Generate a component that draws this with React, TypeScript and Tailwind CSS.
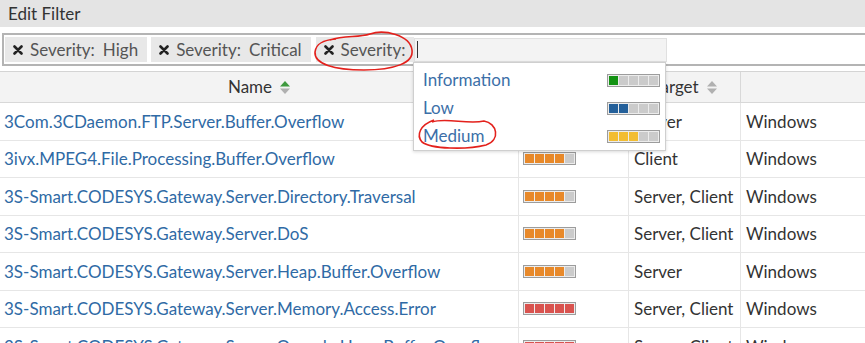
import React from 'react'

type Row = {
  name: string
  level: number
  color: string
  target: string
  os: string
}

const rows: Row[] = [
  { name: '3Com.3CDaemon.FTP.Server.Buffer.Overflow', level: 4, color: 'bg-[#e8892a]', target: 'Server', os: 'Windows' },
  { name: '3ivx.MPEG4.File.Processing.Buffer.Overflow', level: 4, color: 'bg-[#e8892a]', target: 'Client', os: 'Windows' },
  { name: '3S-Smart.CODESYS.Gateway.Server.Directory.Traversal', level: 4, color: 'bg-[#e8892a]', target: 'Server, Client', os: 'Windows' },
  { name: '3S-Smart.CODESYS.Gateway.Server.DoS', level: 4, color: 'bg-[#e8892a]', target: 'Server, Client', os: 'Windows' },
  { name: '3S-Smart.CODESYS.Gateway.Server.Heap.Buffer.Overflow', level: 4, color: 'bg-[#e8892a]', target: 'Server', os: 'Windows' },
  { name: '3S-Smart.CODESYS.Gateway.Server.Memory.Access.Error', level: 5, color: 'bg-[#d9534f]', target: 'Server, Client', os: 'Windows' },
  { name: '3S-Smart.CODESYS.Gateway.Server.Opcode.Heap.Buffer.Overflow', level: 5, color: 'bg-[#d9534f]', target: 'Server, Client', os: 'Windows' },
]

const options = [
  { label: 'Information', level: 1, color: 'bg-[#139313]' },
  { label: 'Low', level: 2, color: 'bg-[#24609a]' },
  { label: 'Medium', level: 3, color: 'bg-[#f2bd32]' },
]

// barre de sévérité : 5 cases, "level" remplies
function SeverityBar({ level, color }: { level: number; color: string }) {
  return (
    <div className="flex gap-[1px] border border-[#9c9c9c] bg-[#ececec] p-[1px]">
      {[0, 1, 2, 3, 4].map((i) => (
        <div key={i} className={`h-[9px] w-[9px] ${i < level ? color : 'bg-[#cbcbcb]'}`} />
      ))}
    </div>
  )
}

function SortIcon({ active }: { active?: boolean }) {
  return (
    <svg width="10" height="13" viewBox="0 0 10 13" className="ml-[8px]">
      <path d="M5 0 L10 5.5 L0 5.5 Z" fill={active ? '#3f9a3f' : '#b0b0b0'} />
      <path d="M5 13 L10 7.5 L0 7.5 Z" fill="#b0b0b0" />
    </svg>
  )
}

function CloseIcon() {
  return (
    <svg width="10" height="10" viewBox="0 0 10 10" className="mr-[7px]">
      <path d="M1.5 1.5 L8.5 8.5 M8.5 1.5 L1.5 8.5" stroke="#222" strokeWidth="2.6" strokeLinecap="round" />
    </svg>
  )
}

function Chip({ field, value }: { field: string; value?: string }) {
  return (
    <div className="flex h-[25px] items-center bg-[#e8e8e8] pl-[8px] pr-[9px] text-[17px] text-[#555]">
      <CloseIcon />
      <span>{field}</span>
      {value && <span className="ml-[8px]">{value}</span>}
    </div>
  )
}

export default function App() {
  return (
    <div className="relative h-[343px] w-[865px] overflow-hidden bg-white font-['Lato','Open_Sans',sans-serif] text-[#333]">
      {/* Titre */}
      <div className="flex h-[27px] items-center bg-[#e4e4e4] pl-[8px] text-[17px] text-[#333]">Edit Filter</div>

      {/* Zone de filtre */}
      <div className="ml-[2px] mt-[6px] h-[33px] w-[880px] border-2 border-[#b4b4b4] bg-white">
        <div className="flex items-center gap-[4px] pl-[1px] pt-[2px]">
          <Chip field="Severity:" value="High" />
          <Chip field="Severity:" value="Critical" />
          <div className="ml-[1px]">
            <Chip field="Severity:" />
          </div>
          <div className="ml-[-4px] flex h-[24px] w-[253px] items-center border border-[#e0e0e0] bg-[#f3f3f3] pl-[2px]">
            <div className="h-[17px] w-[1px] bg-[#333]" />
          </div>
        </div>
      </div>

      {/* Tableau */}
      <div className="mt-[5px] border-t border-[#d4d4d4]">
        <div className="flex h-[31px] border-b border-[#d8d8d8] bg-[#f3f3f3] text-[17px] text-[#333]">
          <div className="flex w-[519px] items-center justify-center border-r border-[#d8d8d8]">
            Name
            <SortIcon active />
          </div>
          <div className="w-[110px] border-r border-[#d8d8d8]" />
          <div className="flex w-[112px] items-center justify-center border-r border-[#d8d8d8]">
            Target
            <SortIcon />
          </div>
          <div className="flex-1" />
        </div>
        {rows.map((r) => (
          <div key={r.name} className="flex h-[37.5px] border-b border-[#e6e6e6] text-[17px]">
            <div className="flex w-[519px] items-center border-r border-[#e6e6e6] pl-[4px] text-[#2f6aa5]">
              <span className="whitespace-nowrap">{r.name}</span>
            </div>
            <div className="flex w-[110px] items-center border-r border-[#e6e6e6] pl-[4px]">
              <SeverityBar level={r.level} color={r.color} />
            </div>
            <div className="flex w-[112px] items-center overflow-hidden whitespace-nowrap border-r border-[#e6e6e6] pl-[5px] text-[#333]">
              {r.target}
            </div>
            <div className="flex flex-1 items-center pl-[5px] text-[#333]">{r.os}</div>
          </div>
        ))}
      </div>

      {/* Menu déroulant */}
      <div className="absolute left-[413px] top-[62px] w-[253px] border border-[#cfcfcf] bg-white pt-[3px] shadow-[0_1px_3px_rgba(0,0,0,0.15)]">
        {options.map((o) => (
          <div key={o.label} className="flex h-[28px] items-center justify-between pl-[9px] pr-[5px] text-[17px] text-[#3c6fa8]">
            <span>{o.label}</span>
            <SeverityBar level={o.level} color={o.color} />
          </div>
        ))}
      </div>

      {/* Annotations rouges */}
      <svg className="pointer-events-none absolute left-0 top-0" width="865" height="343" viewBox="0 0 865 343">
        <path
          d="M330 40 C 345 35, 358 38, 370 34 C 384 29, 410 35, 412 50 C 414 63, 394 70, 364 70 C 334 70, 314 64, 315 52 C 316 44, 322 40, 336 39"
          fill="none"
          stroke="#e3211c"
          strokeWidth="1.6"
        />
        <path
          d="M432 122 C 446 117, 468 125, 484 121 C 497 123, 501 140, 486 145 C 466 150, 431 149, 422 142 C 416 135, 420 125, 434 120"
          fill="none"
          stroke="#e3211c"
          strokeWidth="1.6"
        />
      </svg>
    </div>
  )
}
